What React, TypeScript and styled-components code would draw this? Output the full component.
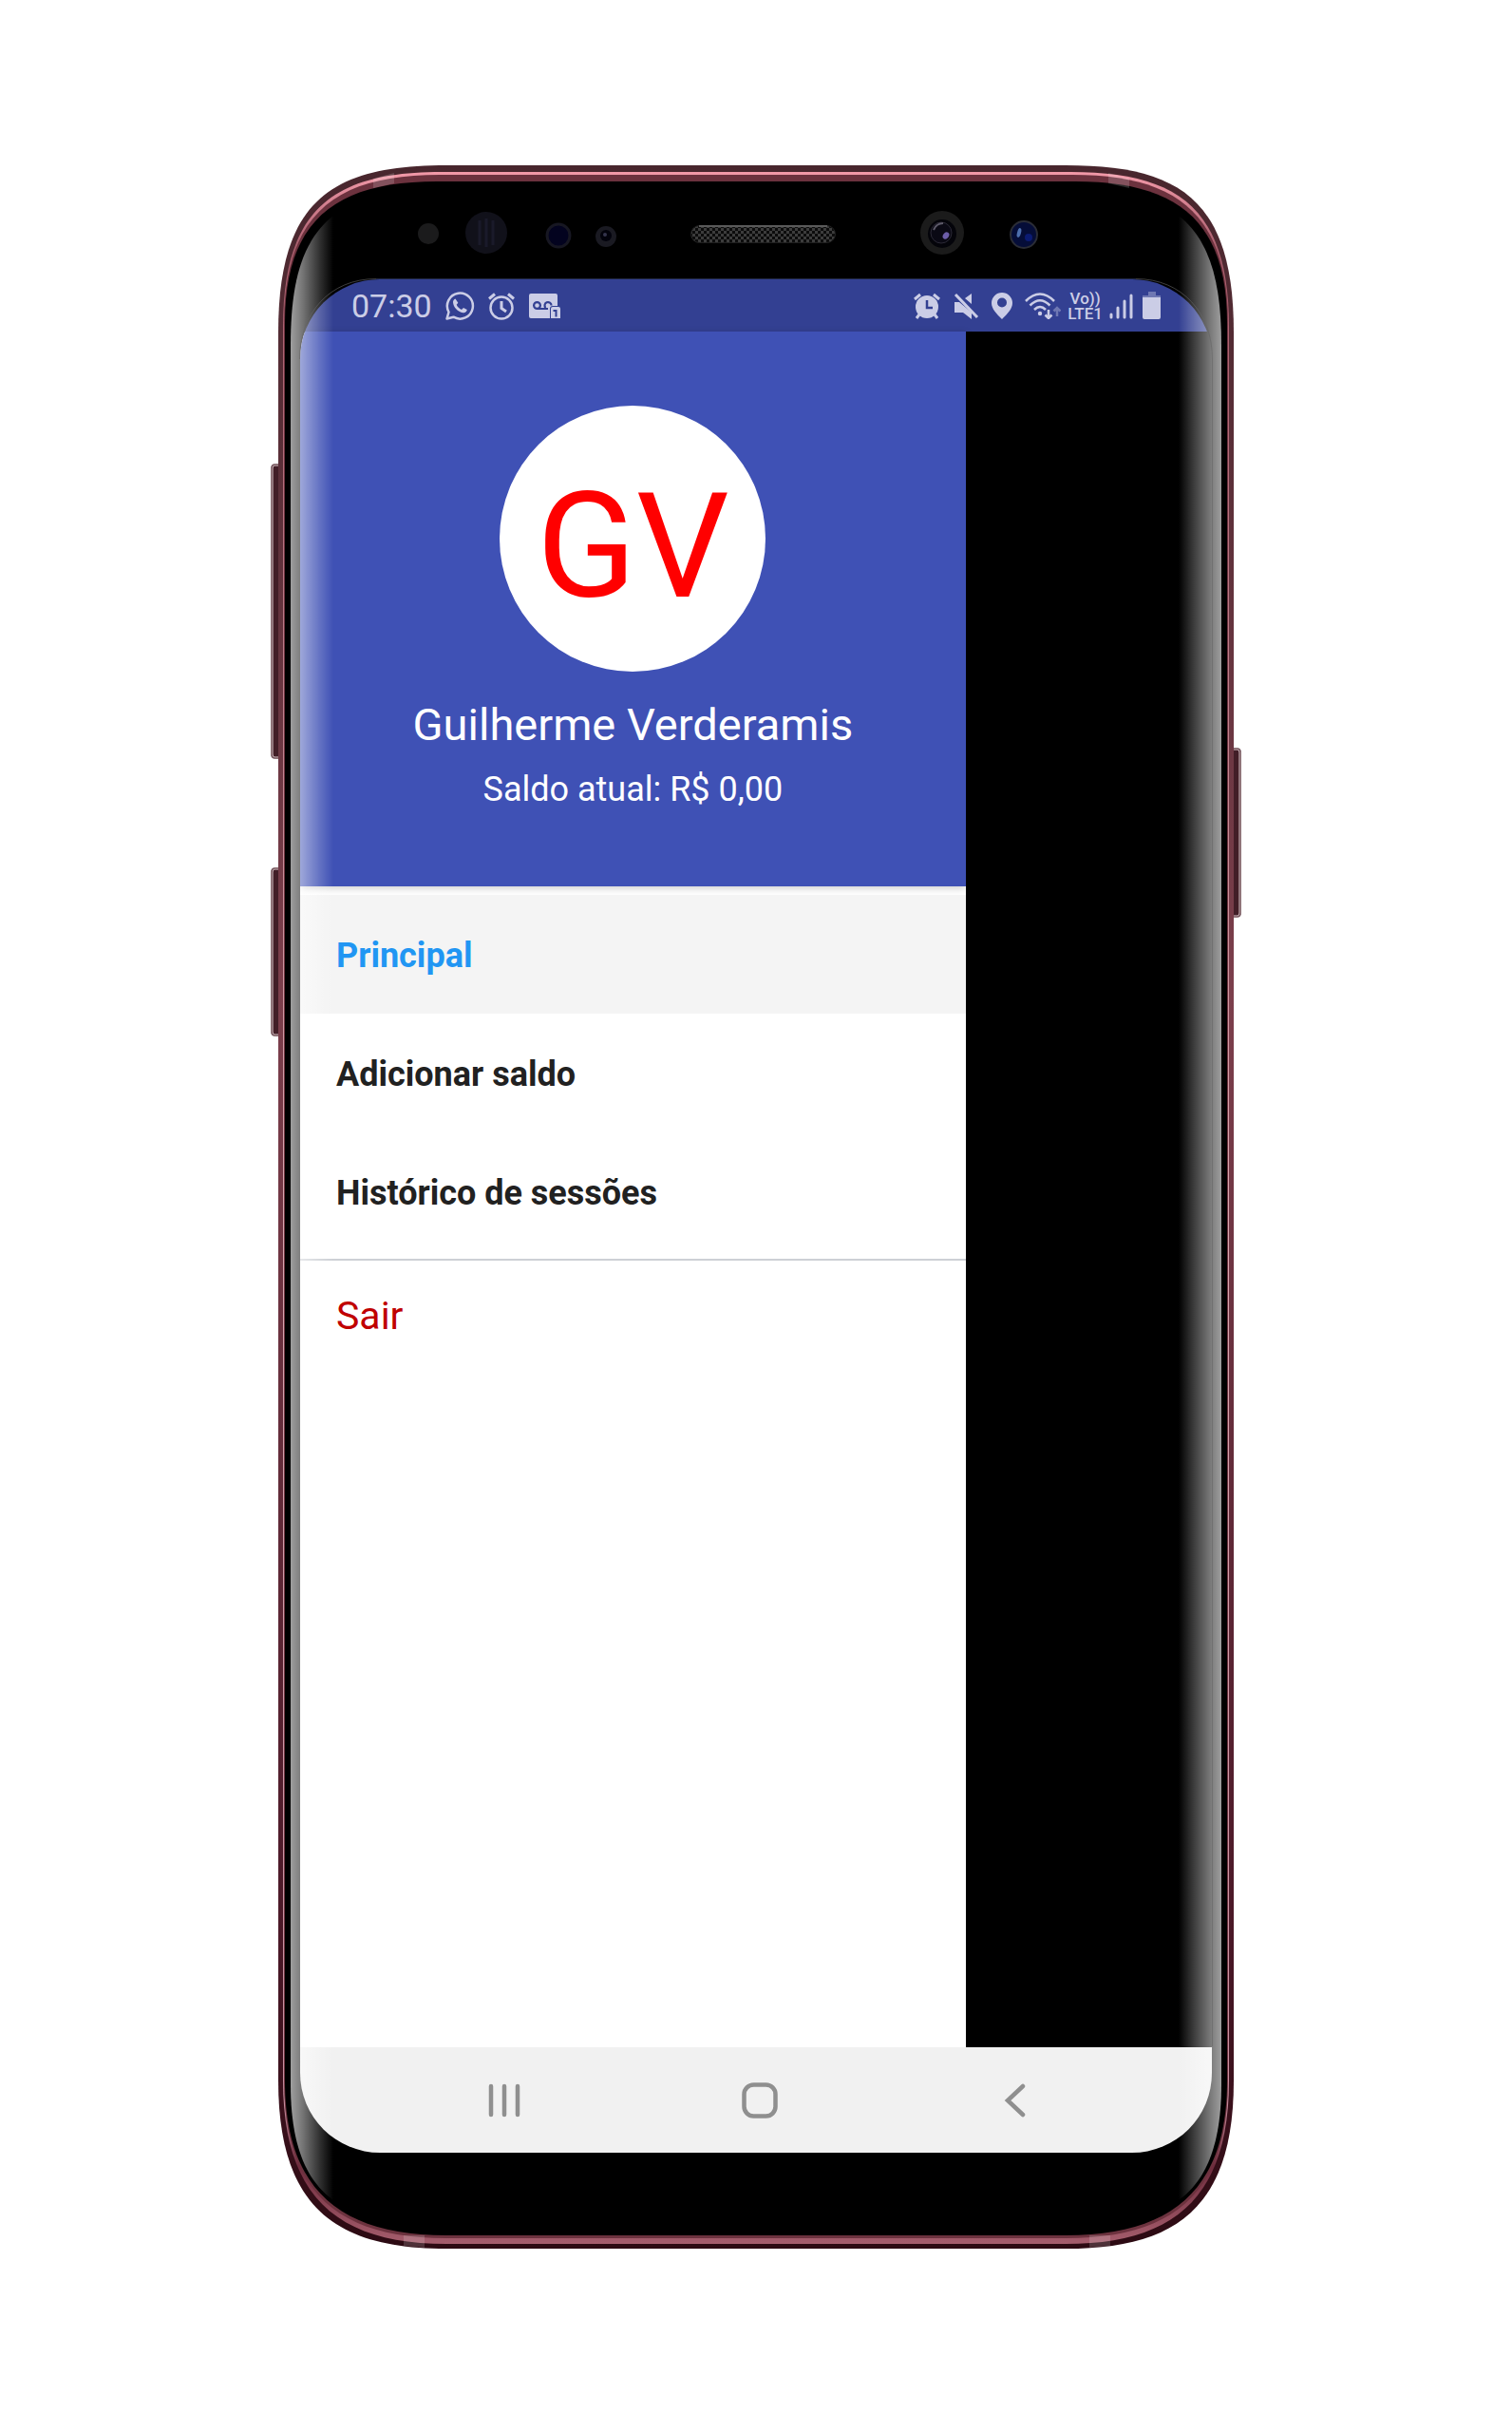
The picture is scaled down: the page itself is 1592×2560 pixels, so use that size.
import React from 'react';
import styled, { createGlobalStyle } from 'styled-components';

const GlobalStyle = createGlobalStyle`
  *, *::before, *::after { box-sizing: border-box; }
  body { margin: 0; background: #fff; font-family: Roboto, "Noto Sans", sans-serif; }
  button, a { font: inherit; }
`;

const Page = styled.main`
  display: flex;
  justify-content: center;
  padding: 174px 24px 193px;
`;

const Phone = styled.div`
  position: relative;
  width: 100%;
  max-width: 1022px;
  min-height: 2193px;
  padding: 120px 31px 101px;
  display: flex;
  flex-direction: column;
`;

const Body = styled.svg`
  position: absolute;
  inset: 0;
  width: 100%;
  height: 100%;
  pointer-events: none;
`;

const Screen = styled.div`
  position: relative;
  flex: 1;
  display: flex;
  flex-direction: column;
  overflow: hidden;
  background: #000;
  border-radius: 84px;
`;

const StatusBar = styled.header`
  display: flex;
  justify-content: space-between;
  align-items: center;
  height: 55px;
  padding: 0 53px 0 54px;
  background: #334092;
  color: #cbcde6;
`;

const StatusGroup = styled.div<{ $gap: number }>`
  display: flex;
  align-items: center;
  gap: ${(p) => p.$gap}px;
  svg { display: block; }
`;

const Clock = styled.time`
  font-size: 34px;
  line-height: 40px;
`;

const Network = styled.span`
  display: flex;
  flex-direction: column;
  align-items: center;
  font-size: 17px;
  line-height: 16px;
  font-weight: 500;
`;

const Main = styled.div`
  flex: 1;
  display: flex;
`;

const Drawer = styled.aside`
  width: 73%;
  display: flex;
  flex-direction: column;
  background: #fff;
`;

const Profile = styled.section`
  display: flex;
  flex-direction: column;
  align-items: center;
  height: 584px;
  padding-top: 78px;
  background: #3f51b5;
  color: #fff;
  box-shadow: 0 2px 8px rgba(0, 0, 0, 0.2);
`;

const Avatar = styled.div`
  display: flex;
  justify-content: center;
  width: 280px;
  height: 280px;
  padding-top: 16px;
  border-radius: 50%;
  background: #fff;
  color: #f00;
  font-size: 154px;
  line-height: 266px;
`;

const Name = styled.h1`
  margin: 28px 0 0;
  font-size: 47px;
  line-height: 56px;
  font-weight: 400;
`;

const Balance = styled.p`
  margin: 16px 0 0;
  font-size: 36px;
  line-height: 48px;
`;

const Menu = styled.nav`
  display: flex;
  flex-direction: column;
  padding: 9px 0 8px;
  border-bottom: 2px solid #cdd0d5;
`;

const MenuLink = styled.a<{ $active?: boolean }>`
  display: flex;
  align-items: center;
  height: 125px;
  padding: 2px 0 0 38px;
  font-size: 36px;
  font-weight: 700;
  text-decoration: none;
  color: ${(p) => (p.$active ? '#2196f3' : '#212121')};
  background: ${(p) => (p.$active ? '#f4f4f4' : 'transparent')};
`;

const Logout = styled.button`
  align-self: stretch;
  height: 116px;
  padding: 0 0 0 38px;
  border: 0;
  background: none;
  text-align: left;
  font-size: 41px;
  color: #c00000;
`;

const NavBar = styled.footer`
  display: grid;
  grid-template-columns: repeat(3, 269px);
  justify-content: center;
  height: 111px;
  padding-left: 7px;
  background: #f1f1f1;
`;

const NavButton = styled.button`
  display: flex;
  align-items: center;
  justify-content: center;
  padding: 0;
  border: 0;
  background: none;
  color: #8f8f8f;
`;

const OUTER =
  'M8 176C8 36 65 0 185 0H837C957 0 1014 36 1014 176V2016C1014 2151 952 2193 837 2193H185C70 2193 8 2151 8 2016Z';
const INNER =
  'M15 166C15 56 70 17 175 17H847C952 17 1007 56 1007 166V2016C1007 2130 950 2179 837 2179H185C72 2179 15 2130 15 2016Z';

function PhoneBody() {
  return (
    <Body viewBox="0 0 1022 2193" preserveAspectRatio="none" aria-hidden="true">
      <defs>
        <linearGradient id="metal" gradientUnits="userSpaceOnUse" x1="0" y1="0" x2="0" y2="2193">
          <stop offset="0" stopColor="#48262d" />
          <stop offset="0.4" stopColor="#7c3f4c" />
          <stop offset="0.85" stopColor="#4a1827" />
          <stop offset="1" stopColor="#2c0a12" />
        </linearGradient>
        <linearGradient id="shine" gradientUnits="userSpaceOnUse" x1="0" y1="0" x2="0" y2="2193">
          <stop offset="0" stopColor="#f99fae" />
          <stop offset="0.04" stopColor="#a85d6c" />
          <stop offset="0.5" stopColor="#d9a9b1" />
          <stop offset="0.93" stopColor="#c790a0" />
          <stop offset="0.96" stopColor="#6f2c3e" />
          <stop offset="1" stopColor="#a8606f" />
        </linearGradient>
        <pattern id="mesh" width="6" height="6" patternUnits="userSpaceOnUse">
          <rect width="6" height="6" fill="#0c0c0c" />
          <rect width="3" height="3" fill="#3c3c3c" />
          <rect x="3" y="3" width="3" height="3" fill="#3c3c3c" />
        </pattern>
      </defs>
      <g fill="#421e27" stroke="#8e7378" strokeWidth="1">
        <rect x="0.5" y="314.5" width="14" height="310" rx="4" />
        <rect x="0.5" y="739.5" width="14" height="177" rx="4" />
        <rect x="1007.5" y="613.5" width="14" height="178" rx="4" />
      </g>
      <g fill="none" stroke="#e3cfd3" strokeWidth="1">
        <path d="M8 316H4Q2 316 2 319V620Q2 623 4 623H8M8 741H4Q2 741 2 744V912Q2 915 4 915H8M1014 615H1018Q1020 615 1020 618V787Q1020 790 1018 790H1014" />
      </g>
      <path d={OUTER} fill="url(#metal)" />
      <path
        d="M13 170C13 44 68 7 180 7H842C954 7 1009 44 1009 170V2016C1009 2140 950 2188 837 2188H185C72 2188 13 2140 13 2016Z"
        fill="url(#shine)"
      />
      <path
        d="M14 168C14 50 69 10 178 10H844C953 10 1008 50 1008 168V2016C1008 2135 950 2182 837 2182H185C72 2182 14 2135 14 2016Z"
        fill="#6c323e"
      />
      <path d={INNER} fill="#000" />
      <g fill="#fff" opacity="0.16">
        <path d="M108 14L130 8V19L108 24ZM882 8L904 14V24L882 19ZM140 2179H162V2192L140 2190ZM862 2179H884V2190L862 2192Z" />
      </g>
      <rect x="442.5" y="63.5" width="152" height="18" rx="9" fill="url(#mesh)" stroke="#202020" />
      <path d="M451 64H586" stroke="#5a5a5a" strokeWidth="2" />
      <circle cx="166" cy="72" r="11" fill="#1b1b1c" />
      <circle cx="227" cy="71" r="22" fill="#11111a" />
      <path d="M220 58V84M227 56V86M234 58V84" stroke="#1a1a2a" strokeWidth="3" />
      <circle cx="303" cy="74" r="12" fill="#03031f" stroke="#171722" strokeWidth="3" />
      <circle cx="353" cy="75" r="11" fill="#1a1a22" />
      <circle cx="353" cy="74" r="6" fill="#02020c" />
      <circle cx="352" cy="73" r="2" fill="#34344d" />
      <circle cx="707" cy="71" r="23" fill="#1b1b1b" />
      <circle cx="707" cy="72" r="15" fill="#04040a" />
      <circle cx="706" cy="71" r="11" fill="#0a0914" stroke="#2b2936" strokeWidth="1" />
      <path d="M698 68Q701 61 708 61" stroke="#5d5a69" strokeWidth="2" fill="none" />
      <ellipse cx="711" cy="74" rx="3" ry="4" fill="#6c5da8" transform="rotate(35 711 74)" />
      <circle cx="793" cy="73" r="14" fill="#050d38" stroke="#2b2d36" strokeWidth="2" />
      <ellipse cx="788" cy="71" rx="2" ry="5" fill="#4d6fae" transform="rotate(15 788 71)" />
      <circle cx="798" cy="76" r="4" fill="#0b1b72" />
    </Body>
  );
}

function GlassReflection() {
  return (
    <Body viewBox="0 0 1022 2193" preserveAspectRatio="none" aria-hidden="true">
      <defs>
        <linearGradient id="glassLeft" gradientUnits="userSpaceOnUse" x1="21" y1="0" x2="66" y2="0">
          <stop offset="0" stopColor="#fff" stopOpacity="0.62" />
          <stop offset="0.25" stopColor="#fff" stopOpacity="0.48" />
          <stop offset="0.7" stopColor="#fff" stopOpacity="0.18" />
          <stop offset="1" stopColor="#fff" stopOpacity="0" />
        </linearGradient>
        <linearGradient id="glassRight" gradientUnits="userSpaceOnUse" x1="1001" y1="0" x2="956" y2="0">
          <stop offset="0" stopColor="#fff" stopOpacity="0.62" />
          <stop offset="0.25" stopColor="#fff" stopOpacity="0.48" />
          <stop offset="0.7" stopColor="#fff" stopOpacity="0.2" />
          <stop offset="1" stopColor="#fff" stopOpacity="0" />
        </linearGradient>
      </defs>
      <path d="M66 53C32 80 21 125 21 190V2020C21 2085 38 2122 66 2142Z" fill="url(#glassLeft)" />
      <path d="M956 53C990 80 1001 125 1001 190V2020C1001 2085 984 2122 956 2142Z" fill="url(#glassRight)" />
      <path
        d="M111 119.500C62 119.500 30.500 156 30.500 204M911 119.500C960 119.500 991.500 156 991.500 204V1980"
        fill="none"
        stroke="#666"
        strokeOpacity="0.6"
      />
      <path d="M111 119.500H911" stroke="#20263f" />
    </Body>
  );
}

const WhatsApp = () => (
  <svg width="32" height="32" viewBox="0 0 32 32" fill="none" stroke="currentColor" strokeWidth="2.500">
    <path d="M2.500 29.500L4.500 22.500A13.500 13.500 0 1 1 9.500 27.700Z" strokeLinejoin="round" />
    <path
      d="M11.500 8.500c-1.600.6-2.600 2-2.500 3.800.3 5 5 10 10.500 11 2.300.3 4-1 4.300-3.200l-3.800-2.200-2 2c-2.500-1-4.300-2.800-5.300-5.200l1.600-2Z"
      fill="currentColor"
      stroke="none"
    />
  </svg>
);

const AlarmOutline = () => (
  <svg width="30" height="32" viewBox="0 0 30 32" fill="none" stroke="currentColor" strokeWidth="2.500">
    <circle cx="15" cy="18" r="11.500" />
    <path d="M15 11V18.500L20 22M2 8.500L8 3.500M28 8.500L22 3.500" strokeWidth="3" />
  </svg>
);

const Voicemail = () => (
  <svg width="34" height="28" viewBox="0 0 34 28" fill="none">
    <path d="M3 1H29Q31 1 31 3V14H26Q23 14 23 17V27H3Q1 27 1 25V3Q1 1 3 1Z" fill="currentColor" />
    <g stroke="#334092" strokeWidth="2.200">
      <circle cx="9.500" cy="13.500" r="3.400" />
      <path d="M9.500 17H21M18.500 16A3.500 3.500 0 1 1 24.500 13.500" />
    </g>
    <path
      d="M26 15H32Q34 15 34 17V27H24V17Q24 15 26 15ZM26.500 18V20H28.500V25.500H30.500V18Z"
      fill="currentColor"
      fillRule="evenodd"
    />
  </svg>
);

const AlarmFilled = () => (
  <svg width="30" height="30" viewBox="0 0 30 30">
    <circle cx="15" cy="16" r="12" fill="currentColor" />
    <path d="M2 8L8 3M28 8L22 3M7 24L4 28M23 24L26 28" stroke="currentColor" strokeWidth="3" fill="none" />
    <path d="M15 9V17H21" stroke="#334092" strokeWidth="2.500" fill="none" />
  </svg>
);

const Mute = () => (
  <svg width="27" height="28" viewBox="0 0 27 28" fill="currentColor">
    <path d="M1 10H6L19 21V28L10 21H1ZM19 1V12L12 6Z" />
    <path d="M2 2L25 26" stroke="currentColor" strokeWidth="3" />
  </svg>
);

const Pin = () => (
  <svg width="22" height="28" viewBox="0 0 22 28" fill="currentColor">
    <path
      fillRule="evenodd"
      d="M11 0A11 11 0 0 1 22 11C22 17 17 22 11 28C5 22 0 17 0 11A11 11 0 0 1 11 0ZM11 5.500A5 5 0 1 0 11 15.500A5 5 0 1 0 11 5.500Z"
    />
  </svg>
);

const Wifi = () => (
  <svg width="38" height="28" viewBox="0 0 38 28" fill="none" stroke="currentColor" strokeWidth="2.500">
    <path d="M1 9Q16-6 31 9M5.500 13.500Q16 3 26.500 13.500M10 18Q16 12 22 18" />
    <circle cx="16" cy="22" r="2.200" fill="currentColor" stroke="none" />
    <path d="M25 18V27M21.500 23.500L25 27L28.500 23.500" />
    <path d="M34 25V16M30.500 19.500L34 16L37.500 19.500" opacity="0.4" />
  </svg>
);

const Signal = () => (
  <svg width="28" height="28" viewBox="0 0 28 28" stroke="currentColor" strokeWidth="3" strokeLinecap="round">
    <path d="M2 23V26M9 16V26M16 9V26M23 3V26" />
  </svg>
);

const Battery = () => (
  <svg width="20" height="30" viewBox="0 0 20 30" fill="currentColor">
    <path d="M6 0H14V4H19V7H0V4H6Z" opacity="0.4" />
    <path d="M0 6H19V27Q19 29 17 29H2Q0 29 0 27Z" />
  </svg>
);

const Recents = () => (
  <svg width="36" height="36" viewBox="0 0 36 36" stroke="currentColor" strokeWidth="4.500" strokeLinecap="round">
    <path d="M4 3V33M18 3V33M32 3V33" />
  </svg>
);

const Home = () => (
  <svg width="38" height="38" viewBox="0 0 38 38" fill="none" stroke="currentColor" strokeWidth="4.500">
    <rect x="2.500" y="2.500" width="33" height="33" rx="10" />
  </svg>
);

const Back = () => (
  <svg width="24" height="36" viewBox="0 0 24 36" fill="none" stroke="currentColor" strokeWidth="4.500" strokeLinecap="round">
    <path d="M20 3L4 18L20 33" />
  </svg>
);

export default function App() {
  return (
    <>
      <GlobalStyle />
      <Page>
        <Phone>
          <PhoneBody />
          <Screen>
            <StatusBar>
              <StatusGroup $gap={13}>
                <Clock>07:30</Clock>
                <WhatsApp />
                <AlarmOutline />
                <Voicemail />
              </StatusGroup>
              <StatusGroup $gap={13}>
                <AlarmFilled />
                <Mute />
                <Pin />
                <StatusGroup $gap={7}>
                  <Wifi />
                  <Network>
                    <span>Vo))</span>
                    <span>LTE1</span>
                  </Network>
                  <Signal />
                  <Battery />
                </StatusGroup>
              </StatusGroup>
            </StatusBar>
            <Main>
              <Drawer>
                <Profile>
                  <Avatar>GV</Avatar>
                  <Name>Guilherme Verderamis</Name>
                  <Balance>Saldo atual: R$ 0,00</Balance>
                </Profile>
                <Menu>
                  <MenuLink href="#principal" $active>Principal</MenuLink>
                  <MenuLink href="#saldo">Adicionar saldo</MenuLink>
                  <MenuLink href="#historico">Histórico de sessões</MenuLink>
                </Menu>
                <Logout type="button">Sair</Logout>
              </Drawer>
            </Main>
            <NavBar>
              <NavButton type="button" aria-label="Recentes"><Recents /></NavButton>
              <NavButton type="button" aria-label="Início"><Home /></NavButton>
              <NavButton type="button" aria-label="Voltar"><Back /></NavButton>
            </NavBar>
          </Screen>
          <GlassReflection />
        </Phone>
      </Page>
    </>
  );
}
